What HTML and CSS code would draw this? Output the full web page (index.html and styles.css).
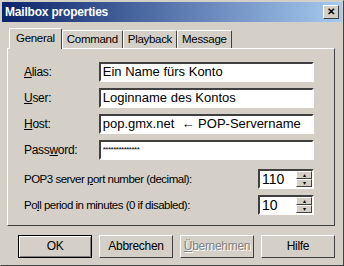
FILE: index.html
```html
<!DOCTYPE html>
<html lang="de">
<head>
    <meta charset="UTF-8">
    <title>Mailbox properties</title>
    <link rel="stylesheet" href="styles.css">
</head>
<body>
    <div class="dialog">
        <div class="titlebar">
            <span class="title">Mailbox properties</span>
            <span class="close">&#10005;</span>
        </div>
        <div class="tabs">
            <div class="tab active">General</div>
            <div class="tab">Command</div>
            <div class="tab">Playback</div>
            <div class="tab last">Message</div>
        </div>
        <div class="panel">
            <div class="row">
                <label><u>A</u>lias:</label>
                <div class="field">Ein Name fürs Konto</div>
            </div>
            <div class="row">
                <label><u>U</u>ser:</label>
                <div class="field">Loginname des Kontos</div>
            </div>
            <div class="row">
                <label><u>H</u>ost:</label>
                <div class="field">pop.gmx.net &nbsp;&larr; POP-Servername</div>
            </div>
            <div class="row">
                <label>Pass<u>w</u>ord:</label>
                <div class="field pw">**************</div>
            </div>
            <div class="row num first">
                <label>POP3 server <u>p</u>ort number (decimal):</label>
                <div class="spin">
                    <div class="spin-val">110</div>
                    <div class="spin-btns"><span>&#9652;</span><span>&#9662;</span></div>
                </div>
            </div>
            <div class="row num">
                <label>Po<u>l</u>l period in minutes (0 if disabled):</label>
                <div class="spin">
                    <div class="spin-val">10</div>
                    <div class="spin-btns"><span>&#9652;</span><span>&#9662;</span></div>
                </div>
            </div>
        </div>
        <div class="buttons">
            <div class="btn default">OK</div>
            <div class="btn">Abbrechen</div>
            <div class="btn disabled"><u>Ü</u>bernehmen</div>
            <div class="btn">Hilfe</div>
        </div>
    </div>
</body>
</html>
```
FILE: styles.css
```css
body {
    margin: 0;
    background-color: #d4d0c8;
    font-family: 'Liberation Sans', Arial, sans-serif;
    font-size: 11px;
    letter-spacing: -0.3px;
    color: #000;
}
.dialog {
    width: 344px;
    height: 266px;
    box-sizing: border-box;
    border: 1px solid #d4d0c8;
    border-right-color: #404040;
    border-bottom-color: #404040;
    background-color: #d4d0c8;
}
.titlebar {
    height: 20px;
    margin: 1px 1px 0 1px;
    background: linear-gradient(to right, #0a246a, #a6caf0);
    display: flex;
    align-items: center;
    justify-content: space-between;
    padding: 0 3px 0 3px;
}
.title {
    color: #fff;
    font-weight: bold;
    font-size: 12px;
    letter-spacing: -0.2px;
}
.close {
    width: 16px;
    height: 14px;
    box-sizing: border-box;
    background-color: #d4d0c8;
    border: 1px solid #fff;
    border-right-color: #404040;
    border-bottom-color: #404040;
    font-size: 10px;
    font-weight: bold;
    line-height: 12px;
    text-align: center;
}
.tabs {
    display: flex;
    margin: 7px 0 0 10px;
    height: 19px;
    align-items: flex-end;
}
.tab {
    height: 18px;
    box-sizing: border-box;
    padding: 0 4px;
    border: 1px solid #fff;
    border-bottom: none;
    border-right: 1px solid #404040;
    border-radius: 2px 2px 0 0;
    line-height: 17px;
    font-size: 11.5px;
}
.tab.active {
    height: 21px;
    margin-bottom: -1px;
    padding: 0 6px;
    margin-left: -2px;
    line-height: 18px;
    position: relative;
    background-color: #d4d0c8;
}
.panel {
    margin: 0 8px 0 6px;
    height: 178px;
    box-sizing: border-box;
    border: 1px solid #fff;
    border-right-color: #404040;
    border-bottom-color: #404040;
    padding: 13px 20px 0 16px;
}
.row {
    display: flex;
    align-items: center;
    height: 20px;
    margin-bottom: 6px;
}
.row label {
    width: 75px;
    font-size: 12px;
}
.field {
    width: 216px;
    height: 20px;
    box-sizing: border-box;
    background-color: #fff;
    border: 2px solid #404040;
    border-right-color: #fff;
    border-bottom-color: #fff;
    font-size: 13px;
    letter-spacing: 0;
    line-height: 16px;
    padding-left: 2px;
    white-space: nowrap;
    overflow: hidden;
}
.field.pw {
    font-size: 8px;
    letter-spacing: -0.5px;
}
.row.num.first {
    margin-top: 9px;
}
.row.num label {
    flex: 1;
    font-size: 11.5px;
    letter-spacing: -0.5px;
}
.spin {
    display: flex;
    width: 56px;
    height: 20px;
    box-sizing: border-box;
    background-color: #fff;
    border: 2px solid #404040;
    border-right-color: #fff;
    border-bottom-color: #fff;
}
.spin-val {
    flex: 1;
    font-size: 14px;
    letter-spacing: 0;
    line-height: 16px;
    padding-left: 2px;
}
.spin-btns {
    width: 16px;
    display: flex;
    flex-direction: column;
}
.spin-btns span {
    flex: 1;
    background-color: #d4d0c8;
    border: 1px solid #fff;
    border-right-color: #404040;
    border-bottom-color: #404040;
    font-size: 6px;
    line-height: 6px;
    text-align: center;
}
.buttons {
    display: flex;
    gap: 7px;
    margin: 9px 0 0 17px;
}
.btn {
    width: 74px;
    height: 23px;
    box-sizing: border-box;
    border: 1px solid #fff;
    border-right-color: #404040;
    border-bottom-color: #404040;
    text-align: center;
    line-height: 21px;
    font-size: 12px;
}
.btn.default {
    border: 1px solid #000;
    box-shadow: inset 1px 1px 0 #fff, inset -1px -1px 0 #808080;
}
.btn.disabled {
    color: #808080;
    text-shadow: 1px 1px 0 #fff;
}
```
